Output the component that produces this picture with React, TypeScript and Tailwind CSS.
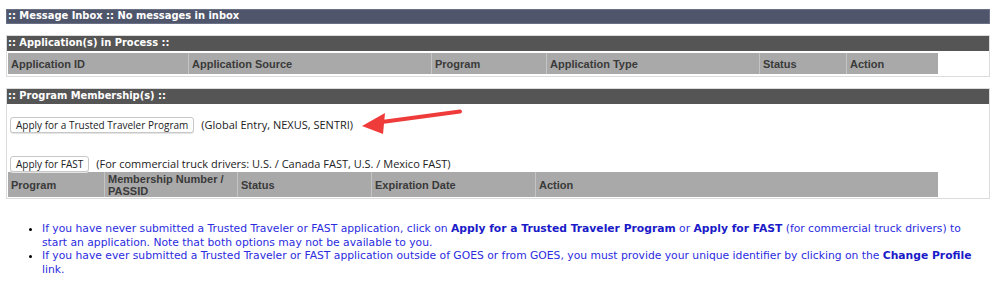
const appCols = [
  { label: 'Application ID', w: 'w-[180px]' },
  { label: 'Application Source', w: 'w-[243px]' },
  { label: 'Program', w: 'w-[115px]' },
  { label: 'Application Type', w: 'w-[213px]' },
  { label: 'Status', w: 'w-[87px]' },
  { label: 'Action', w: 'w-[92px]' },
];

const memberCols = [
  { label: 'Program', w: 'w-[96px]' },
  { label: 'Membership Number / PASSID', w: 'w-[133px]' },
  { label: 'Status', w: 'w-[134px]' },
  { label: 'Expiration Date', w: 'w-[164px]' },
  { label: 'Action', w: 'w-[403px]' },
];

function HeaderRow({ cols, h }: { cols: { label: string; w: string }[]; h: string }) {
  return (
    <div className={`flex w-[930px] bg-[#a9a9a9] ${h}`}>
      {cols.map((c, i) => (
        <div
          key={c.label}
          className={`${c.w} flex items-center px-[3px] text-[11px] leading-[12px] font-bold text-[#3a3a3a] ${i > 0 ? 'border-l border-[#c4c4c4]' : ''}`}
        >
          {c.label}
        </div>
      ))}
    </div>
  );
}

function Bar({ children, color }: { children: React.ReactNode; color: string }) {
  return (
    <div
      className={`h-[15px] flex items-center px-[1px] text-white font-bold text-[11px] ${color}`}
      style={{ fontFamily: '"DejaVu Sans Condensed", "DejaVu Sans", sans-serif' }}
    >
      {children}
    </div>
  );
}

function Btn({ children }: { children: React.ReactNode }) {
  return (
    <button className="h-[16px] px-[5px] bg-white border border-[#c8c8c8] rounded-[3px] text-[10px] leading-[14px] text-[#222] shadow-[0_1px_0_#e4e4e4]">
      {children}
    </button>
  );
}

export default function App() {
  return (
    <div
      className="w-[1000px] h-[296px] bg-white pt-[9px] pl-[6px] pr-[10px]"
      style={{ fontFamily: '"Liberation Sans", Arial, sans-serif' }}
    >
      <Bar color="bg-[#4f566b] border border-[#6a7085]">:: Message Inbox :: No messages in inbox</Bar>

      <div className="mt-[11px] border border-[#dcdcdc] pb-[2px]">
        <Bar color="bg-[#555555]">:: Application(s) in Process ::</Bar>
        <div className="pt-[2px] pl-[1px]">
          <HeaderRow cols={appCols} h="h-[21px]" />
        </div>
      </div>

      <div className="mt-[11px] border border-[#dcdcdc] pb-[1px]">
        <Bar color="bg-[#555555]">:: Program Membership(s) ::</Bar>
        <div className="pl-[3px]" style={{ fontFamily: '"Open Sans", "DejaVu Sans", sans-serif' }}>
          <div className="relative mt-[13px] flex items-center gap-[7px]">
            <Btn>Apply for a Trusted Traveler Program</Btn>
            <span className="text-[11px] text-[#222]">(Global Entry, NEXUS, SENTRI)</span>
            <svg className="absolute left-[350px] top-[-8px]" width="104" height="28" viewBox="0 0 104 28">
              <line x1="100" y1="2.5" x2="18" y2="13.5" stroke="#f03b3b" strokeWidth="4" strokeLinecap="round" />
              <polygon points="2,17 25,4 23,25" fill="#f03b3b" />
            </svg>
          </div>
          <div className="mt-[22px] flex items-center gap-[7px]">
            <Btn>Apply for FAST</Btn>
            <span className="text-[11px] text-[#222]">
              (For commercial truck drivers: U.S. / Canada FAST, U.S. / Mexico FAST)
            </span>
          </div>
        </div>
        <div className="pl-[1px]">
          <HeaderRow cols={memberCols} h="h-[25px]" />
        </div>
      </div>

      <ul
        className="mt-[23px] pl-[36px] pr-[10px] list-disc text-[10.75px] leading-[13.5px] text-[#2b2be0]"
        style={{ fontFamily: '"DejaVu Sans", Verdana, sans-serif' }}
      >
        <li className="marker:text-black">
          If you have never submitted a Trusted Traveler or FAST application, click on{' '}
          <b className="text-[#1a1ac8]">Apply for a Trusted Traveler Program</b> or{' '}
          <b className="text-[#1a1ac8]">Apply for FAST</b> (for commercial truck drivers) to start an
          application. Note that both options may not be available to you.
        </li>
        <li className="marker:text-black">
          If you have ever submitted a Trusted Traveler or FAST application outside of GOES or from GOES, you
          must provide your unique identifier by clicking on the <b className="text-[#1a1ac8]">Change Profile</b>{' '}
          link.
        </li>
      </ul>
    </div>
  );
}
